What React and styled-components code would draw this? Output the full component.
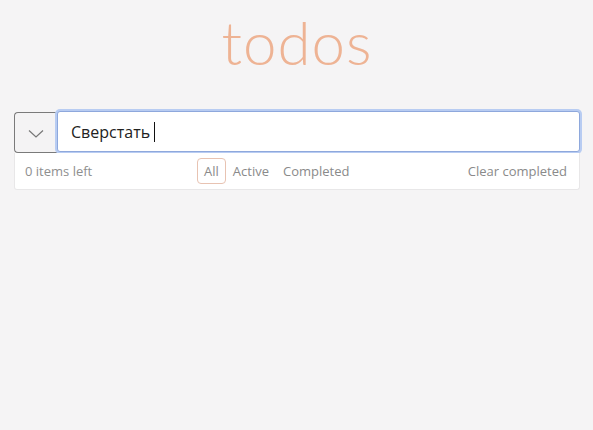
import styled, { createGlobalStyle } from "styled-components";

const GlobalStyle = createGlobalStyle`
  html, body {
    margin: 0;
    padding: 0;
    background-color: #f5f4f5;
    font-family: "Open Sans", "Noto Sans", sans-serif;
  }
`;

export default function App() {
  return (
    <Page>
      <GlobalStyle />
      <Title>todos</Title>
      <Card>
        <InputRow>
          <ToggleAll aria-label="toggle all">
            <svg width="16" height="10" viewBox="0 0 16 10">
              <path d="M1 1.5 L8 8 L15 1.5" fill="none" stroke="#777" strokeWidth="1.2" />
            </svg>
          </ToggleAll>
          <NewTodo>
            Сверстать <Caret />
          </NewTodo>
        </InputRow>
        <Footer>
          <Count>0 items left</Count>
          <Filters>
            <Filter selected>All</Filter>
            <Filter>Active</Filter>
            <Filter>Completed</Filter>
          </Filters>
          <ClearButton>Clear completed</ClearButton>
        </Footer>
      </Card>
    </Page>
  );
}

//----- Styled Components

const Page = styled.div`
  min-height: 100vh;
  padding: 0 13px 0 14px;
  box-sizing: border-box;
`;

const Title = styled.h1`
  margin: 0;
  padding-top: 4px;
  height: 108px;
  text-align: center;
  font-family: "Lato", "Open Sans", sans-serif;
  font-weight: 300;
  font-size: 60px;
  line-height: 76px;
  color: #eeb394;
  letter-spacing: 1px;
`;

const Card = styled.div`
  display: flex;
  flex-direction: column;
`;

const InputRow = styled.div`
  display: flex;
  height: 41px;
`;

const ToggleAll = styled.button`
  width: 43px;
  height: 41px;
  box-sizing: border-box;
  border: 1px solid #7a7a7a;
  border-right: none;
  border-radius: 4px 0 0 4px;
  background-color: #f4f3f4;
  display: flex;
  align-items: center;
  justify-content: center;
  padding: 0;
  padding-top: 3px;
`;

const NewTodo = styled.div`
  flex: 1;
  box-sizing: border-box;
  height: 41px;
  margin-top: -1px;
  background-color: #ffffff;
  border: 1px solid #8ea8dc;
  border-radius: 3px;
  box-shadow: 0 0 0 2px #b8ccf2;
  display: flex;
  align-items: center;
  padding-left: 13px;
  font-size: 16px;
  color: #222;
  white-space: pre;
`;

const Caret = styled.span`
  display: inline-block;
  width: 1px;
  height: 20px;
  background-color: #111;
`;

const Footer = styled.div`
  display: flex;
  align-items: center;
  height: 37px;
  box-sizing: border-box;
  background-color: #ffffff;
  border: 1px solid #e8e7e8;
  border-top: none;
  border-radius: 0 0 3px 3px;
  padding: 0 12px 0 10px;
  font-size: 13px;
  color: #8a8a8a;
`;

const Count = styled.span`
  width: 172px;
  color: #8f8f8f;
`;

const Filters = styled.div`
  display: flex;
  align-items: center;
`;

const Filter = styled.span`
  padding: 3px 6px;
  border: 1px solid ${(p) => (p.selected ? "#e8c3b2" : "transparent")};
  border-radius: 4px;
  color: #8a8a8a;
`;

const ClearButton = styled.span`
  margin-left: auto;
  color: #8a8a8a;
`;
